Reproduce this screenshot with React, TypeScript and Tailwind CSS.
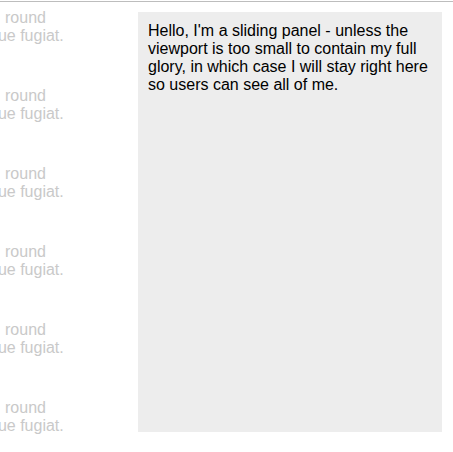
import React from "react";

export default function App() {
  const blocks = [0, 1, 2, 3, 4, 5];
  return (
    <div className="w-[453px] h-[452px] bg-white pt-px overflow-hidden" style={{ fontFamily: '"Liberation Sans", Arial, sans-serif' }}>
      <div className="border-t border-[#bdbdbd] flex">
        <div className="w-[138px] overflow-hidden pt-[7px] flex flex-col gap-[42px] text-[16px] leading-[18px] text-[#c9c9c9]">
          {blocks.map((i) => (
            <div key={i} className="whitespace-nowrap">
              <div className="ml-[5px]">round</div>
              <div className="-ml-[11px]">que fugiat.</div>
            </div>
          ))}
        </div>
        <div className="w-[304px] h-[420px] mt-[10px] bg-[#ededed] p-[10px] text-[16px] leading-[18px] text-black">
          Hello, I'm a sliding panel - unless the viewport is too small to contain my full glory, in which case I will stay right here so users can see all of me.
        </div>
      </div>
    </div>
  );
}
